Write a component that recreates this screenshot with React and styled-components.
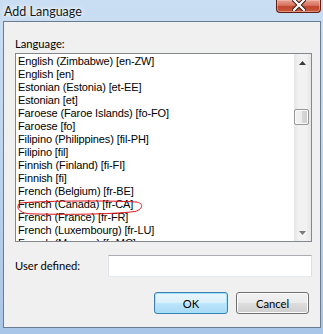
import React from "react";
import styled, { createGlobalStyle } from "styled-components";

const Global = createGlobalStyle`
  html, body { margin: 0; padding: 0; }
  body { width: 323px; height: 334px; overflow: hidden; }
`;

const languages = [
  "English (Zimbabwe) [en-ZW]",
  "English [en]",
  "Estonian (Estonia) [et-EE]",
  "Estonian [et]",
  "Faroese (Faroe Islands) [fo-FO]",
  "Faroese [fo]",
  "Filipino (Philippines) [fil-PH]",
  "Filipino [fil]",
  "Finnish (Finland) [fi-FI]",
  "Finnish [fi]",
  "French (Belgium) [fr-BE]",
  "French (Canada) [fr-CA]",
  "French (France) [fr-FR]",
  "French (Luxembourg) [fr-LU]",
  "French (Monaco) [fr-MC]",
];

const Window = styled.div`
  width: 323px;
  height: 334px;
  box-sizing: border-box;
  display: flex;
  flex-direction: column;
  background: linear-gradient(180deg, #cadef3 0%, #c0d6ef 40%, #a9c5e7 100%);
  padding: 0 2px 6px 3px;
  font-family: Lato, "Noto Sans", sans-serif;
`;

const TitleBar = styled.div`
  height: 21px;
  display: flex;
  justify-content: space-between;
  align-items: flex-start;
  flex: none;
`;

const Title = styled.div`
  margin: 4px 0 0 1px;
  font-size: 12.5px;
  line-height: 15px;
  color: #101820;
  text-shadow: 0 0 6px #ffffff, 0 0 3px #ffffff;
`;

const CloseButton = styled.div`
  width: 45px;
  height: 13px;
  box-sizing: border-box;
  border: 1px solid #5b1f16;
  border-top: none;
  border-radius: 0 0 4px 4px;
  background: linear-gradient(180deg, #e8a193 0%, #d6725e 45%, #c2452d 55%, #c95a3c 100%);
  box-shadow: inset 0 0 0 1px rgba(255, 200, 190, 0.5);
  display: flex;
  justify-content: center;
  align-items: flex-start;
`;

const Client = styled.div`
  flex: 1;
  background: #f0f0f0;
  border: 1px solid #6a7c8f;
  display: flex;
  flex-direction: column;
  padding: 0 8px 0 11px;
`;

const Label = styled.div`
  font-size: 11.2px;
  color: #000;
  line-height: 16px;
  margin-top: ${(p) => p.$top || 0}px;
`;

const ListBox = styled.div`
  position: relative;
  margin-top: 1px;
  height: 189px;
  box-sizing: border-box;
  border: 1px solid #828790;
  background: #fff;
  display: flex;
`;

const Rows = styled.div`
  flex: 1;
  overflow: hidden;
  padding: 1px 0 0 2px;
`;

const Row = styled.div`
  height: 13px;
  line-height: 13px;
  font-family: "Liberation Sans", Arial, sans-serif;
  font-size: 11px;
  letter-spacing: -0.12px;
  color: #000;
  white-space: nowrap;
`;

const ScrollBar = styled.div`
  width: 17px;
  flex: none;
  display: flex;
  flex-direction: column;
  background: linear-gradient(90deg, #e6e6e6 0%, #f2f2f2 30%, #f2f2f2 70%, #e6e6e6 100%);
`;

const Arrow = styled.div`
  height: 17px;
  display: flex;
  justify-content: center;
  align-items: center;
  flex: none;
`;

const Track = styled.div`
  flex: 1;
  display: flex;
  flex-direction: column;
`;

const Thumb = styled.div`
  margin-top: ${(p) => p.$top}px;
  height: 16px;
  width: 15px;
  box-sizing: border-box;
  border: 1px solid #979797;
  border-radius: 2px;
  background: linear-gradient(90deg, #f4f4f4 0%, #ececec 50%, #d6d6d6 55%, #cfcfcf 100%);
  box-shadow: inset 0 0 0 1px #fafafa;
`;

const Annotation = styled.svg`
  position: absolute;
  left: 0;
  top: 145px;
  pointer-events: none;
`;

const InputRow = styled.div`
  margin-top: 13px;
  display: flex;
  align-items: center;
  justify-content: space-between;
`;

const TextInput = styled.div`
  width: 204px;
  height: 22px;
  box-sizing: border-box;
  background: #fff;
  border: 1px solid #dcdcdc;
  border-top-color: #abadb3;
  border-left-color: #e2e3ea;
  border-right-color: #dbdfe6;
  border-bottom-color: #e3e9ef;
`;

const Buttons = styled.div`
  margin-top: 15px;
  display: flex;
  justify-content: flex-end;
  gap: 8px;
  padding-right: 3px;
`;

const Button = styled.div`
  width: ${(p) => p.$w}px;
  height: 22px;
  box-sizing: border-box;
  border-radius: 3px;
  border: 1px solid ${(p) => (p.$default ? "#3c7fb1" : "#707070")};
  background: ${(p) =>
    p.$default
      ? "linear-gradient(180deg, #eaf6fd 0%, #d9f0fc 48%, #bee6fd 52%, #a7d9f5 100%)"
      : "linear-gradient(180deg, #f2f2f2 0%, #ebebeb 48%, #dddddd 52%, #cfcfcf 100%)"};
  box-shadow: inset 0 0 0 1px ${(p) => (p.$default ? "#9ee3fb" : "#fcfcfc")};
  display: flex;
  justify-content: center;
  align-items: center;
  font-size: 11.2px;
  color: #000;
`;

export default function App() {
  return (
    <>
      <Global />
      <Window>
        <TitleBar>
          <Title>Add Language</Title>
          <CloseButton>
            <svg width="14" height="11" viewBox="0 0 14 11">
              <path d="M2 0 L12 10 M12 0 L2 10" stroke="#3a1a14" strokeWidth="4.2" strokeLinecap="square" />
              <path d="M2 0 L12 10 M12 0 L2 10" stroke="#ffffff" strokeWidth="2.2" strokeLinecap="square" />
            </svg>
          </CloseButton>
        </TitleBar>
        <Client>
          <Label $top={14}>Language:</Label>
          <ListBox>
            <Rows>
              {languages.map((l) => (
                <Row key={l}>{l}</Row>
              ))}
            </Rows>
            <ScrollBar>
              <Arrow>
                <svg width="7" height="4" viewBox="0 0 7 4">
                  <path d="M0 4 L3.5 0 L7 4 Z" fill="#3a3a3a" />
                </svg>
              </Arrow>
              <Track>
                <Thumb $top={38} />
              </Track>
              <Arrow>
                <svg width="7" height="4" viewBox="0 0 7 4">
                  <path d="M0 0 L7 0 L3.5 4 Z" fill="#7a7a7a" />
                </svg>
              </Arrow>
            </ScrollBar>
            <Annotation width="130" height="18" viewBox="0 0 130 18">
              <path
                d="M4 4 C30 1.5 100 1.5 120 3 C128 4 127.5 10 119 12.5 C95 15.5 45 15.8 14 14.8 C2 14 -0.5 8 4 4 Z"
                fill="none"
                stroke="#e0141e"
                strokeWidth="1"
              />
            </Annotation>
          </ListBox>
          <InputRow>
            <Label>User defined:</Label>
            <TextInput />
          </InputRow>
          <Buttons>
            <Button $default $w={74}>OK</Button>
            <Button $w={73}>Cancel</Button>
          </Buttons>
        </Client>
      </Window>
    </>
  );
}
